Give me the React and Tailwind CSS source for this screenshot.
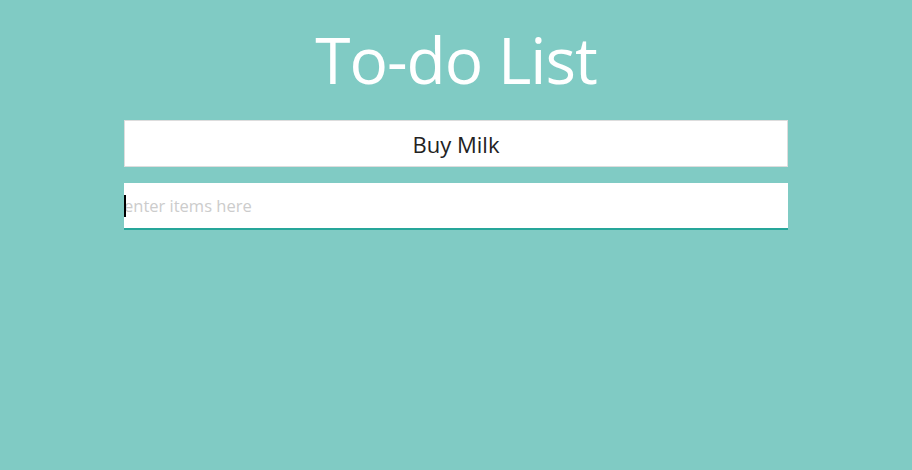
export default function App() {
  return (
    <div className="min-h-[470px] w-full bg-[#80cbc4] pt-[20px]">
      <h1 className="text-center text-[64px] leading-[80px] text-white font-['Open_Sans',sans-serif] font-normal tracking-[-1px]">
        To-do List
      </h1>
      <div className="mx-auto mt-[20px] flex w-[664px] flex-col gap-[16px] font-['Open_Sans',sans-serif]">
        <div className="flex h-[47px] items-center justify-center border border-[#dddddd] bg-white pt-[2px] text-[22px] text-[#222222]">
          Buy Milk
        </div>
        <div className="relative h-[47px] border-b-2 border-[#26a69a] bg-white">
          <div className="absolute left-0 top-[12px] h-[22px] w-[1.5px] bg-black" />
          <span className="flex h-full items-center pt-[2px] text-[16.5px] text-[#cccccc]">enter items here</span>
        </div>
      </div>
    </div>
  );
}
